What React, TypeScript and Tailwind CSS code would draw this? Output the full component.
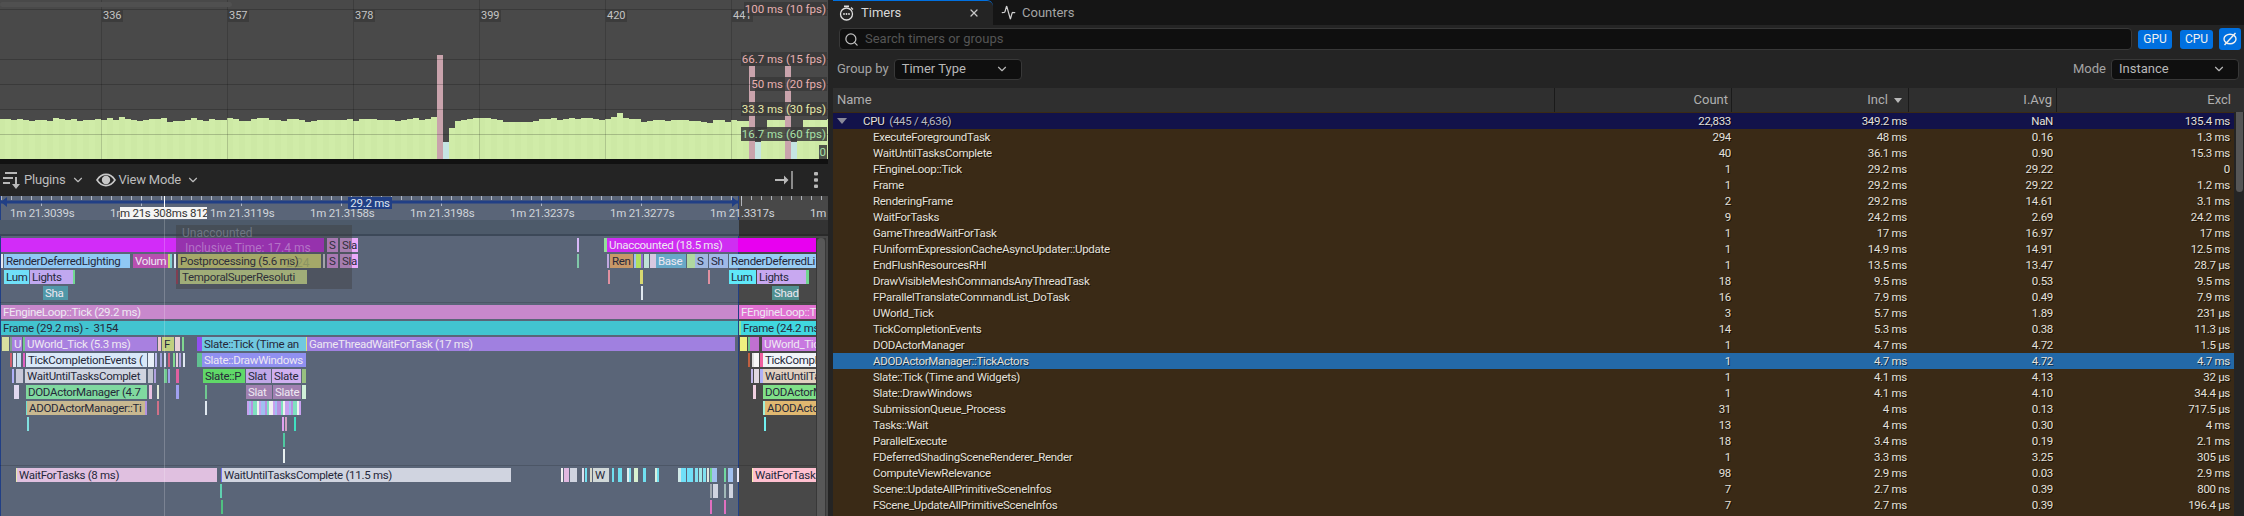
import { Activity, ChevronDown, Search, X } from 'lucide-react'

type Span = [number, number, string, string?, boolean?]

const BARS = [
  40, 40, 39, 40, 39, 38, 39, 39, 38, 41, 40, 39, 40, 38, 39, 39, 40, 39, 41, 39, 42, 40, 39, 38, 39, 40, 40, 41, 37, 38,
  38, 39, 41, 39, 38, 40, 39, 39, 41, 40, 38, 38, 40, 41, 41, 39, 39, 38, 40, 40, 39, 37, 38, 39, 39, 39, 39, 39, 40, 38,
  40, 40, 40, 39, 39, 39, 38, 39, 40, 41, 39, 40, 42, 0, 0, 31, 38, 39, 40, 41, 41, 41, 40, 39, 37, 37, 37, 37, 37, 38,
  40, 40, 41, 39, 40, 41, 40, 41, 41, 40, 39, 40, 42, 46, 41, 40, 40, 37, 38, 39, 39, 38, 39, 39, 39, 38, 38, 37, 36, 39,
  39, 37, 39, 38, 38, 0, 0, 30, 39, 39, 39, 0, 0, 29, 39, 39, 39, 39, 40, 40,
]

const SPIKES: Record<number, number> = { 73: 104, 125: 93, 131: 93 }
const SHORT = [74, 126, 132]

const STRIPE_COLORS = ['#c8a0f0', '#e0e0f0', '#80e0c0', '#f0c0e0', '#a0c0f0', '#d8e8a0', '#f0f0f0', '#90d0e8', '#b890e0', '#e8b0d0']

const stripes: Span[] = Array.from({ length: 27 }, (_, i) => [247 + i * 2, 249 + i * 2, STRIPE_COLORS[(i * 3 + (i % 4)) % 10]] as Span)

const TRACK_TOP: Span[][] = [
  [
    [1, 324, '#d22cf8'],
    [327, 338, '#f0a0ff', 'S'],
    [340, 358, '#ecaafc', 'Sla'],
    [577, 579, '#d8b8f8'],
    [604, 607, '#90e098'],
    [607, 738, '#cf2ef2', 'Unaccounted (18.5 ms)', true],
    [738, 816, '#e800f0'],
  ],
  [
    [1, 2, '#e8e8f0'],
    [4, 130, '#90c8f4', 'RenderDeferredLighting'],
    [133, 168, '#b850b0', 'Volum', true],
    [168, 170, '#c8d870'],
    [170, 172, '#80d0d0'],
    [174, 176, '#e0e8f8'],
    [178, 321, '#ecf088', 'Postprocessing (5.6 ms)'],
    [323, 324, '#e8e8f0'],
    [327, 338, '#f0a0ff', 'S'],
    [340, 358, '#ecaafc', 'Sla'],
    [577, 578, '#80c8a8'],
    [607, 609, '#c0a8e0'],
    [610, 633, '#c89868', 'Ren'],
    [634, 636, '#a0c0f0'],
    [636, 641, '#b0e060'],
    [641, 643, '#9070d0'],
    [644, 649, '#c0e0d8'],
    [650, 656, '#d8c8e0'],
    [656, 686, '#68a8c8', 'Base', true],
    [687, 695, '#b0d8a0'],
    [695, 708, '#a0b8e0', 'S'],
    [709, 728, '#a0b8e8', 'Sh'],
    [729, 816, '#98ccf4', 'RenderDeferredLi'],
  ],
  [
    [4, 29, '#70e0f8', 'Lum'],
    [30, 73, '#c0a8f0', 'Lights'],
    [73, 75, '#70d890'],
    [176, 177, '#b04060'],
    [180, 307, '#e3f8a0', 'TemporalSuperResoluti'],
    [608, 609, '#e090a0'],
    [640, 643, '#d8d870'],
    [708, 709, '#e090a0'],
    [729, 756, '#60e8f8', 'Lum'],
    [757, 806, '#c8a8f0', 'Lights'],
    [806, 809, '#70d890'],
  ],
  [
    [43, 68, '#5098a8', 'Sha', true],
    [641, 642, '#e0e8f0'],
    [772, 799, '#509090', 'Shad', true],
  ],
]

const TRACK_MAIN: Span[][] = [
  [
    [1, 738, '#c888cc', 'FEngineLoop::Tick (29.2 ms)', true],
    [739, 816, '#e070d0', 'FEngineLoop::T', true],
  ],
  [
    [1, 738, '#42c4d0', 'Frame (29.2 ms) -  3154'],
    [739, 741, '#90e098'],
    [741, 816, '#40d8e0', 'Frame (24.2 ms'],
  ],
  [
    [2, 9, '#d8e0a0'],
    [10, 11, '#80a090'],
    [12, 22, '#a880e0', 'U', true],
    [23, 24, '#70c890'],
    [25, 157, '#a880e0', 'UWorld_Tick (5.3 ms)', true],
    [158, 161, '#f0c8d0'],
    [162, 174, '#c0d080', 'F'],
    [175, 180, '#e8d0d8'],
    [182, 183, '#80d890'],
    [197, 202, '#9050f0'],
    [202, 306, '#70c8e0', 'Slate::Tick (Time an'],
    [306, 307, '#e0e080'],
    [307, 735, '#a080e0', 'GameThreadWaitForTask (17 ms)', true],
    [740, 747, '#f0f080'],
    [748, 749, '#70c890'],
    [750, 759, '#c070d0'],
    [762, 816, '#c878e0', 'UWorld_Tick', true],
  ],
  [
    [10, 12, '#d06070'],
    [13, 16, '#e0e8f8'],
    [17, 21, '#c8e0f0'],
    [23, 25, '#e060c0'],
    [26, 147, '#d8e8f8', 'TickCompletionEvents ('],
    [148, 154, '#e8f0f8'],
    [155, 157, '#c0c0f0'],
    [160, 162, '#a0a0d8'],
    [164, 165, '#d0d8f0'],
    [168, 169, '#d06080'],
    [173, 175, '#80d890'],
    [176, 178, '#e8d0e0'],
    [179, 180, '#b0a0e0'],
    [183, 184, '#e0e8f0'],
    [197, 202, '#60c090'],
    [202, 306, '#9090f0', 'Slate::DrawWindows', true],
    [748, 749, '#c06040'],
    [752, 753, '#e0e0e0'],
    [754, 759, '#f8f8f8'],
    [760, 763, '#f060a0'],
    [763, 816, '#f0f4f8', 'TickCompletion'],
  ],
  [
    [12, 14, '#b0b0f8'],
    [16, 23, '#c8c8d8'],
    [25, 146, '#d0d4e0', 'WaitUntilTasksComplet'],
    [148, 153, '#c0c4d0'],
    [154, 156, '#b0a0e0'],
    [164, 167, '#70c890'],
    [168, 169, '#a0a0e8'],
    [176, 179, '#e060a0'],
    [203, 245, '#60d868', 'Slate::P'],
    [246, 271, '#c0a8e8', 'Slat'],
    [272, 301, '#d0b0f0', 'Slate'],
    [302, 306, '#98c080'],
    [751, 753, '#c0b8e8'],
    [754, 759, '#e0d8e0'],
    [760, 763, '#b0b0f8'],
    [763, 816, '#e0d0c0', 'WaitUntilTasks'],
  ],
  [
    [14, 19, '#e0d8f0'],
    [26, 147, '#80d8a0', 'DODActorManager (4.7'],
    [149, 152, '#e8c0e0'],
    [157, 158, '#e0e8d8'],
    [176, 179, '#a0a0f0'],
    [205, 206, '#70c890'],
    [246, 272, '#a080b0', 'Slat', true],
    [273, 301, '#a080b0', 'Slate', true],
    [302, 306, '#d0f0d8'],
    [753, 756, '#f0d0e0'],
    [763, 816, '#80e088', 'DODActorManager'],
  ],
  [
    [26, 27, '#70e0d0'],
    [27, 145, '#c8b890', 'ADODActorManager::Ti'],
    [145, 147, '#b090e0'],
    [157, 158, '#d07088'],
    [205, 206, '#e0e8f0'],
    ...stripes,
    [763, 765, '#a0f0d8'],
    [765, 816, '#e0b870', 'ADODActorManager'],
  ],
  [
    [27, 28, '#80e0e0'],
    [282, 283, '#e0a0f0'],
    [285, 286, '#d0a0c0'],
    [294, 295, '#40e0c0'],
    [764, 765, '#70f0f0'],
  ],
  [[283, 284, '#50c8a0']],
  [[283, 284, '#e8f0f0']],
]

const TRACK_WAIT: Span[][] = [
  [
    [16, 17, '#e8e8b0'],
    [17, 217, '#e0c0e0', 'WaitForTasks (8 ms)'],
    [221, 222, '#7070f0'],
    [222, 511, '#d0d4e0', 'WaitUntilTasksComplete (11.5 ms)'],
    [561, 562, '#f0f0f0'],
    [564, 569, '#e0b8e0'],
    [570, 577, '#d0d4e0'],
    [582, 583, '#e0e0f0'],
    [585, 586, '#70e0f0'],
    [590, 592, '#d8d8c8'],
    [593, 609, '#d0d8d8', 'W'],
    [612, 614, '#70e0f0'],
    [618, 622, '#70e0f0'],
    [627, 628, '#e0f0f0'],
    [629, 630, '#80e0f0'],
    [634, 638, '#d8f0d0'],
    [643, 646, '#70e0f0'],
    [655, 656, '#d8f0e0'],
    [657, 658, '#70e0f0'],
    [678, 681, '#d0e8e8'],
    [681, 686, '#70e0f8'],
    [687, 693, '#70e0f8'],
    [695, 698, '#80e0f0'],
    [699, 702, '#a0e8e8'],
    [703, 706, '#80e0f0'],
    [707, 708, '#e0e8e0'],
    [710, 711, '#70d890'],
    [712, 717, '#a0c0f0'],
    [724, 726, '#70d8a0'],
    [728, 733, '#a0c0f0'],
    [737, 738, '#e8e8f8'],
    [752, 753, '#f8f0b0'],
    [753, 816, '#ffc0d0', 'WaitForTasks'],
  ],
  [
    [220, 221, '#60d0b0'],
    [710, 712, '#a0a8b0'],
    [713, 718, '#d0d4e0'],
    [724, 725, '#a0b8b8'],
    [729, 733, '#d0d4e0'],
  ],
  [
    [221, 222, '#50c080'],
    [710, 711, '#e070c0'],
    [724, 726, '#e070c0'],
  ],
]

const ROWS: [string, string, string, string, string][] = [
  ['ExecuteForegroundTask', '294', '48 ms', '0.16', '1.3 ms'],
  ['WaitUntilTasksComplete', '40', '36.1 ms', '0.90', '15.3 ms'],
  ['FEngineLoop::Tick', '1', '29.2 ms', '29.22', '0'],
  ['Frame', '1', '29.2 ms', '29.22', '1.2 ms'],
  ['RenderingFrame', '2', '29.2 ms', '14.61', '3.1 ms'],
  ['WaitForTasks', '9', '24.2 ms', '2.69', '24.2 ms'],
  ['GameThreadWaitForTask', '1', '17 ms', '16.97', '17 ms'],
  ['FUniformExpressionCacheAsyncUpdater::Update', '1', '14.9 ms', '14.91', '12.5 ms'],
  ['EndFlushResourcesRHI', '1', '13.5 ms', '13.47', '28.7 µs'],
  ['DrawVisibleMeshCommandsAnyThreadTask', '18', '9.5 ms', '0.53', '9.5 ms'],
  ['FParallelTranslateCommandList_DoTask', '16', '7.9 ms', '0.49', '7.9 ms'],
  ['UWorld_Tick', '3', '5.7 ms', '1.89', '231 µs'],
  ['TickCompletionEvents', '14', '5.3 ms', '0.38', '11.3 µs'],
  ['DODActorManager', '1', '4.7 ms', '4.72', '1.5 µs'],
  ['ADODActorManager::TickActors', '1', '4.7 ms', '4.72', '4.7 ms'],
  ['Slate::Tick (Time and Widgets)', '1', '4.1 ms', '4.13', '32 µs'],
  ['Slate::DrawWindows', '1', '4.1 ms', '4.10', '34.4 µs'],
  ['SubmissionQueue_Process', '31', '4 ms', '0.13', '717.5 µs'],
  ['Tasks::Wait', '13', '4 ms', '0.30', '4 ms'],
  ['ParallelExecute', '18', '3.4 ms', '0.19', '2.1 ms'],
  ['FDeferredShadingSceneRenderer_Render', '1', '3.3 ms', '3.25', '305 µs'],
  ['ComputeViewRelevance', '98', '2.9 ms', '0.03', '2.9 ms'],
  ['Scene::UpdateAllPrimitiveSceneInfos', '7', '2.7 ms', '0.39', '800 ns'],
  ['FScene_UpdateAllPrimitiveSceneInfos', '7', '2.7 ms', '0.39', '196.4 µs'],
]

const FRAME_TICKS = [
  { x: 102, label: '336' },
  { x: 228, label: '357' },
  { x: 354, label: '378' },
  { x: 480, label: '399' },
  { x: 606, label: '420' },
  { x: 732, label: '441' },
]

const FPS_LABELS = [
  { y: 2, label: '100 ms (10 fps)', color: 'text-[#e8b0b0]' },
  { y: 52, label: '66.7 ms (15 fps)', color: 'text-[#e8b0b0]' },
  { y: 77, label: '50 ms (20 fps)', color: 'text-[#e8b0b0]' },
  { y: 102, label: '33.3 ms (30 fps)', color: 'text-[#e8e8a8]' },
  { y: 127, label: '16.7 ms (60 fps)', color: 'text-[#a8e0a8]' },
  { y: 145, label: '0', color: 'text-[#a8e0a8]' },
]

const RULER_LABELS = ['1m 21.3039s', '1m 21.3079s', '1m 21.3119s', '1m 21.3158s', '1m 21.3198s', '1m 21.3237s', '1m 21.3277s', '1m 21.3317s', '1m']

function FrameGraph() {
  return (
    <div className="relative h-[159px] overflow-hidden bg-[#494949]">
      <svg width="828" height="159" className="block">
        {BARS.map((h, i) => {
          const x = i * 6 - 1
          if (SPIKES[i]) return <rect key={i} x={x} y={159 - SPIKES[i]} width="6" height={SPIKES[i]} fill="#c9a3ac" />
          if (SHORT.includes(i)) return <rect key={i} x={x} y={142} width="6" height="17" fill="#c5e5e3" />
          return <rect key={i} x={x} y={159 - h} width="6" height={h} fill={i % 2 ? '#d0eca8' : '#cde9a5'} />
        })}
        {[9, 59, 84, 109, 134].map((y) => (
          <line key={y} x1="0" x2="828" y1={y + 0.5} y2={y + 0.5} stroke="#000" strokeOpacity="0.2" />
        ))}
        {FRAME_TICKS.map((t) => (
          <line key={t.x} x1={t.x - 0.5} x2={t.x - 0.5} y1="0" y2="159" stroke="#000" strokeOpacity="0.16" />
        ))}
      </svg>
      <div className="absolute left-0 top-[2px] h-[5px] w-[232px] rounded-full bg-[#505050]" />
      {FRAME_TICKS.map((t) => (
        <span
          key={t.x}
          className="absolute top-[10px] h-[12px] overflow-hidden bg-[#3c3c3c] px-[1px] text-[11px] leading-[12px] text-[#c4c4c4]"
          style={{ left: t.x }}
        >
          {t.label}
        </span>
      ))}
      {FPS_LABELS.map((l) => (
        <span key={l.label} className={`absolute right-[1px] h-[14px] bg-[#383838]/85 px-[1px] text-[11.5px] leading-[14px] ${l.color}`} style={{ top: l.y }}>
          {l.label}
        </span>
      ))}
    </div>
  )
}

function Toolbar() {
  return (
    <div className="flex h-[32px] items-center bg-[#242424] pl-[3px] pr-[10px] text-[13px] tracking-[-0.2px] text-[#bcbcbc]">
      <svg width="19" height="18" viewBox="0 0 19 18" className="shrink-0 text-[#b8b8b8]">
        <path d="M2 1h12v2H2zM0 6h10v2H0zM0 11h7v2H0z" fill="currentColor" />
        <path d="M12 6h2v7h3l-4 5-4-5h3z" fill="currentColor" />
      </svg>
      <span className="ml-[2px]">Plugins</span>
      <ChevronDown className="ml-[6px] h-[14px] w-[14px]" />
      <svg width="20" height="14" viewBox="0 0 20 14" className="ml-[11px] shrink-0 text-[#c8c8c8]">
        <path d="M1 7c2.500-3.800 5.500-5.600 9-5.600S16.500 3.200 19 7c-2.500 3.800-5.500 5.600-9 5.600S3.500 10.800 1 7z" fill="none" stroke="currentColor" strokeWidth="1.600" />
        <circle cx="10" cy="7" r="4.200" fill="currentColor" />
      </svg>
      <span className="ml-[2px]">View Mode</span>
      <ChevronDown className="ml-[5px] h-[14px] w-[14px]" />
      <div className="ml-auto flex items-center gap-[21px]">
        <svg width="18" height="18" viewBox="0 0 18 18" className="text-[#b8b8b8]">
          <path d="M0 8h9V4.500L13.500 9 9 13.500V10H0z" fill="currentColor" />
          <rect x="16" y="0" width="2" height="18" fill="currentColor" opacity="0.7" />
        </svg>
        <svg width="4" height="16" viewBox="0 0 4 16" className="text-[#b8b8b8]">
          <rect x="0" y="0" width="4" height="3.500" rx="1" fill="currentColor" />
          <rect x="0" y="6.200" width="4" height="3.500" rx="1" fill="currentColor" />
          <rect x="0" y="12.500" width="4" height="3.500" rx="1" fill="currentColor" />
        </svg>
      </div>
    </div>
  )
}

function Ruler() {
  const ticks = Array.from({ length: 83 }, (_, i) => 1 + i * 10)
  return (
    <div className="relative h-[24px] overflow-hidden text-[11.5px] tracking-[-0.25px] text-[#d0d4da]">
      <svg width="828" height="24" className="absolute left-0 top-0">
        {ticks.map((x) => (
          <line key={x} x1={x + 0.5} x2={x + 0.5} y1="0" y2="4" stroke="#d4d8e0" strokeOpacity="0.75" />
        ))}
        {[41, 141, 241, 341, 441, 541, 641, 741].map((x) => (
          <line key={x} x1={x + 0.5} x2={x + 0.5} y1="0" y2="10" stroke="#d4d8e0" strokeOpacity="0.75" />
        ))}
        <rect x="1" y="4.500" width="737" height="3" fill="#213f85" />
        <path d="M1 6l6-5v10zM738 6l-6-5v10z" fill="#213f85" />
      </svg>
      {RULER_LABELS.map((label, i) => (
        <span key={label} className="absolute top-[10px] whitespace-nowrap leading-[14px]" style={{ left: 10 + i * 100 }}>
          {label}
        </span>
      ))}
      <span className="absolute left-[348px] top-[1px] h-[12px] w-[44px] bg-[#213f85] text-center leading-[12px] text-[#dde4f0]">29.2 ms</span>
      <span className="absolute left-[120px] top-[11px] h-[12px] w-[87px] overflow-hidden whitespace-nowrap bg-[#f4f4f4] leading-[12px] text-[#333]">m 21s 308ms 812</span>
    </div>
  )
}

function Track({ spans }: { spans: Span[] }) {
  return (
    <div className="relative mb-[2px] h-[14px] shrink-0">
      {spans.map(([a, b, bg, text, light]) => (
        <div
          key={`${a}-${b}`}
          className={`absolute top-0 h-[14px] overflow-hidden whitespace-pre pl-[2px] text-[11.5px] leading-[14px] tracking-[-0.3px] ${light ? 'text-[#eee8f2]' : 'text-[#26283a]'}`}
          style={{ left: a, width: b - a, background: bg }}
        >
          {text}
        </div>
      ))}
    </div>
  )
}

function Timeline() {
  return (
    <div className="relative h-[320px] overflow-hidden bg-[#484848]">
      <div className="absolute bottom-0 left-0 top-0 w-[739px] border-x border-x-[#213f85] bg-[#5a6578]" />
      <div className="relative z-[1]">
        <Ruler />
        <div className="flex h-[14px]">
          <div className="w-[739px] bg-[#4d5a6a]" />
          <div className="flex-1 bg-[#333]" />
        </div>
        <div className="flex h-[2px]">
          <div className="w-[739px] bg-[#3c4858]" />
          <div className="flex-1 bg-[#2a2a2a]" />
        </div>
        <div className="h-[2px]" />
        <div className="w-[816px]">
          {TRACK_TOP.map((spans, i) => (
            <Track key={i} spans={spans} />
          ))}
        </div>
        <div className="mb-[1px] mt-[1px] h-[1px] w-[816px] bg-[#000]/15" />
        <div className="h-[1px]" />
        <div className="w-[816px]">
          {TRACK_MAIN.map((spans, i) => (
            <Track key={i} spans={spans} />
          ))}
        </div>
        <div className="mt-[1px] h-[1px] w-[816px] bg-[#000]/15" />
        <div className="h-[2px]" />
        <div className="w-[816px]">
          {TRACK_WAIT.map((spans, i) => (
            <Track key={i} spans={spans} />
          ))}
        </div>
      </div>
      {/* hover line and fading tooltip sit above the tracks */}
      <div className="absolute bottom-0 left-[164px] top-0 z-[2] w-[1px] bg-white/20" />
      <div className="absolute left-[164px] top-0 z-[2] h-[11px] w-[1px] bg-white" />
      <div className="absolute left-[176px] top-[29px] z-[3] h-[64px] w-[176px] bg-[#3c3c3c]/40 text-[12px] leading-[14px] text-[#808a98]/70">
        <div className="ml-[6px] mt-[1px]">Unaccounted</div>
        <div className="ml-[9px] mt-[1px] text-[#c8a0d8]/60">Inclusive Time: 17.4 ms</div>
        <div className="ml-[110px] mt-[1px] text-[#808a60]/70">2.24</div>
      </div>
      <div className="absolute bottom-0 right-[2px] top-[42px] z-[3] w-[10px] bg-[#383838]">
        <div className="mx-auto h-full w-[8px] rounded-t-full bg-[#585858]" />
      </div>
    </div>
  )
}

function Combo({ label, width }: { label: string; width: string }) {
  return (
    <div className={`flex h-[21px] items-center justify-between rounded-[4px] border border-[#383838] bg-[#0f0f0f] pl-[7px] pr-[12px] text-[13px] text-[#b8b8b8] ${width}`}>
      {label}
      <ChevronDown className="h-[14px] w-[14px]" />
    </div>
  )
}

function TimersPanel() {
  const cols = 'grid grid-cols-[722px_177px_177px_148px_177px]'
  return (
    <div className="flex min-w-0 flex-1 flex-col">
      <div className="flex h-[25px] shrink-0 bg-[#151515]">
        <div className="relative flex w-[160px] items-center rounded-tr-[6px] border-t border-t-[#0070e0] bg-[#242424] pl-[6px] text-[13px] text-[#d8d8d8]">
          <svg width="15" height="16" viewBox="0 0 15 16" className="shrink-0">
            <circle cx="7.500" cy="9" r="6" fill="none" stroke="#e0e0e0" strokeWidth="1.300" />
            <rect x="5" y="0.500" width="5" height="1.500" fill="#e0e0e0" />
            <path d="M12 2.500l2 2" stroke="#e0e0e0" strokeWidth="1.300" />
            <circle cx="5" cy="9" r="0.900" fill="#e0e0e0" />
            <circle cx="7.500" cy="9" r="0.900" fill="#e0e0e0" />
            <circle cx="10" cy="9" r="0.900" fill="#e0e0e0" />
          </svg>
          <span className="ml-[7px]">Timers</span>
          <X className="absolute right-[13px] top-[6px] h-[12px] w-[12px] text-[#c8c8c8]" strokeWidth={2.5} />
        </div>
        <div className="ml-[8px] flex items-center text-[13px] text-[#a4a4a4]">
          <Activity className="h-[15px] w-[15px] text-[#d0d0d0]" strokeWidth={2} />
          <span className="ml-[6px]">Counters</span>
        </div>
      </div>
      <div className="flex h-[28px] shrink-0 items-center bg-[#242424] pl-[6px] pr-[3px]">
        <div className="flex h-[22px] w-[1293px] items-center rounded-[4px] border border-[#383838] bg-[#0f0f0f] pl-[4px] text-[13px] text-[#555]">
          <Search className="h-[15px] w-[15px] text-[#c0c0c0]" strokeWidth={2} />
          <span className="ml-[6px]">Search timers or groups</span>
        </div>
        <div className="ml-[6px] flex h-[19px] w-[34px] items-center justify-center rounded-[3px] bg-[#0070e0] text-[12px] text-[#f0f0f0]">GPU</div>
        <div className="ml-[8px] flex h-[19px] w-[33px] items-center justify-center rounded-[3px] bg-[#0070e0] text-[12px] text-[#f0f0f0]">CPU</div>
        <div className="ml-[6px] flex h-[22px] w-[22px] items-center justify-center rounded-[3px] bg-[#0070e0]">
          <svg width="14" height="14" viewBox="0 0 14 14">
            <ellipse cx="7" cy="7" rx="6" ry="4.800" fill="none" stroke="#f0f0f0" strokeWidth="1.400" />
            <path d="M1.500 13L12.500 1" stroke="#f0f0f0" strokeWidth="1.400" />
          </svg>
        </div>
      </div>
      <div className="flex h-[35px] shrink-0 items-center justify-between bg-[#242424] pb-[3px] pl-[4px] pr-[5px] text-[13px] text-[#a4a4a4]">
        <div className="flex items-center">
          <span>Group by</span>
          <div className="ml-[5px]">
            <Combo label="Timer Type" width="w-[128px]" />
          </div>
        </div>
        <div className="flex items-center">
          <span>Mode</span>
          <div className="ml-[5px]">
            <Combo label="Instance" width="w-[128px]" />
          </div>
        </div>
      </div>
      <div className={`${cols} h-[24px] shrink-0 items-center bg-[#2f2f2f] text-[13px] text-[#b0b0b0]`}>
        <div className="flex h-full items-center border-r border-r-[#1a1a1a] pl-[4px]">Name</div>
        <div className="flex h-full items-center justify-end border-r border-r-[#1a1a1a] pr-[3px]">Count</div>
        <div className="flex h-full items-center justify-end border-r border-r-[#1a1a1a] pr-[6px]">
          Incl
          <svg width="8" height="5" viewBox="0 0 8 5" className="ml-[6px]">
            <path d="M0 0h8L4 5z" fill="#b8b8b8" />
          </svg>
        </div>
        <div className="flex h-full items-center justify-end border-r border-r-[#1a1a1a] pr-[4px]">I.Avg</div>
        <div className="flex h-full items-center justify-end pr-[3px]">Excl</div>
      </div>
      <div className="relative min-h-0 flex-1 overflow-hidden bg-[#3a2a16] text-[11.5px] leading-[16px] tracking-[-0.3px] text-[#e4e0da] [text-shadow:1px_1px_0_#0009]">
        <div className="mt-[1px] w-[1401px]">
          <div className={`${cols} h-[16px] bg-[#12124a]`}>
            <div className="flex items-center">
              <svg width="10" height="6" viewBox="0 0 10 6" className="ml-[4px]">
                <path d="M0 0h10L5 6z" fill="#8a8a9a" />
              </svg>
              <span className="ml-[16px]">CPU</span>
              <span className="ml-[5px] text-[#b8b8c0]">(445 / 4,636)</span>
            </div>
            <div className="pr-[1px] text-right">22,833</div>
            <div className="pr-[2px] text-right">349.2 ms</div>
            <div className="pr-[4px] text-right">NaN</div>
            <div className="pr-[4px] text-right">135.4 ms</div>
          </div>
          {ROWS.map((r) => (
            <div key={r[0]} className={`${cols} h-[16px] ${r[0] === 'ADODActorManager::TickActors' ? 'bg-[#2369a8]' : ''}`}>
              <div className="whitespace-nowrap pl-[40px]">{r[0]}</div>
              <div className="pr-[1px] text-right">{r[1]}</div>
              <div className="pr-[2px] text-right">{r[2]}</div>
              <div className="pr-[4px] text-right">{r[3]}</div>
              <div className="pr-[4px] text-right">{r[4]}</div>
            </div>
          ))}
        </div>
        <div className="absolute bottom-0 right-0 top-[-24px] w-[10px] bg-[#242424]" />
        <div className="absolute right-[1px] top-[-23px] h-[103px] w-[7px] rounded-full bg-[#555]" />
      </div>
    </div>
  )
}

export default function App() {
  return (
    <div className="flex h-[516px] w-[2244px] overflow-hidden bg-[#151515] font-[Roboto,sans-serif]">
      <div className="flex w-[828px] shrink-0 flex-col">
        <FrameGraph />
        <div className="h-[5px] bg-[#111]" />
        <Toolbar />
        <Timeline />
      </div>
      <div className="w-[5px] shrink-0 bg-[#242424]" />
      <TimersPanel />
    </div>
  )
}
